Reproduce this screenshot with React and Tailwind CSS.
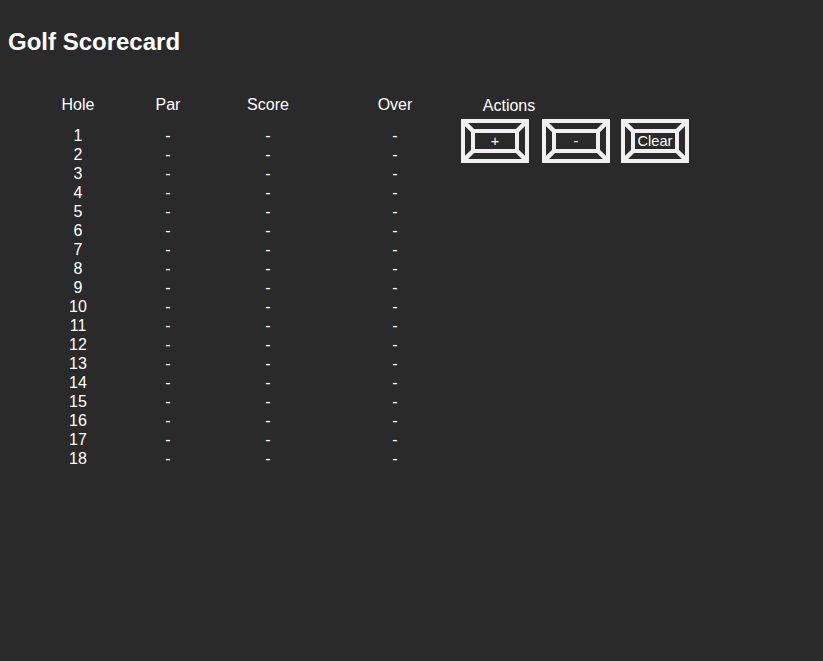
import React from "react";

const holes = Array.from({ length: 18 }, (_, i) => i + 1);

function FrameButton({ children, className = "" }) {
  return (
    <button
      type="button"
      className={`relative flex h-[44px] w-[68px] items-center justify-center border-0 bg-transparent p-0 text-[14.6px] leading-none text-white ${className}`}
    >
      <svg
        className="pointer-events-none absolute inset-0"
        width="68"
        height="44"
        viewBox="0 0 68 44"
        fill="none"
        stroke="#f0f0f0"
      >
        <rect x="2" y="2" width="64" height="40" strokeWidth="4" />
        <rect x="12" y="12" width="44" height="20" strokeWidth="4" />
        <line x1="1" y1="1" x2="13" y2="13" strokeWidth="4.5" />
        <line x1="67" y1="1" x2="55" y2="13" strokeWidth="4.5" />
        <line x1="1" y1="43" x2="13" y2="31" strokeWidth="4.5" />
        <line x1="67" y1="43" x2="55" y2="31" strokeWidth="4.5" />
      </svg>
      <span className="relative">{children}</span>
    </button>
  );
}

export default function App() {
  return (
    <div
      className="min-h-screen w-full bg-[#2a2a2a] text-white"
      style={{ fontFamily: '"Liberation Sans", Arial, sans-serif' }}
    >
      <h1 className="pl-[8px] pt-[26px] text-[24px] font-bold leading-[32px]">Golf Scorecard</h1>
      <div className="mt-[37px] flex pl-[28px]">
        <div className="grid grid-cols-[100px_80px_120px_134px] text-center text-[16px] leading-[19px]">
          <div>Hole</div>
          <div>Par</div>
          <div>Score</div>
          <div>Over</div>
          <div className="col-span-4 h-[12px]" />
          {holes.map((h) => (
            <React.Fragment key={h}>
              <div>{h}</div>
              <div>-</div>
              <div>-</div>
              <div>-</div>
            </React.Fragment>
          ))}
        </div>
        <div className="ml-[-1px] flex flex-col">
          <div className="mt-[1px] w-[96px] text-center text-[16px] leading-[19px]">Actions</div>
          <div className="mt-[4px] flex">
            <FrameButton>+</FrameButton>
            <FrameButton className="ml-[13px]">-</FrameButton>
            <FrameButton className="ml-[11px]">Clear</FrameButton>
          </div>
        </div>
      </div>
    </div>
  );
}
